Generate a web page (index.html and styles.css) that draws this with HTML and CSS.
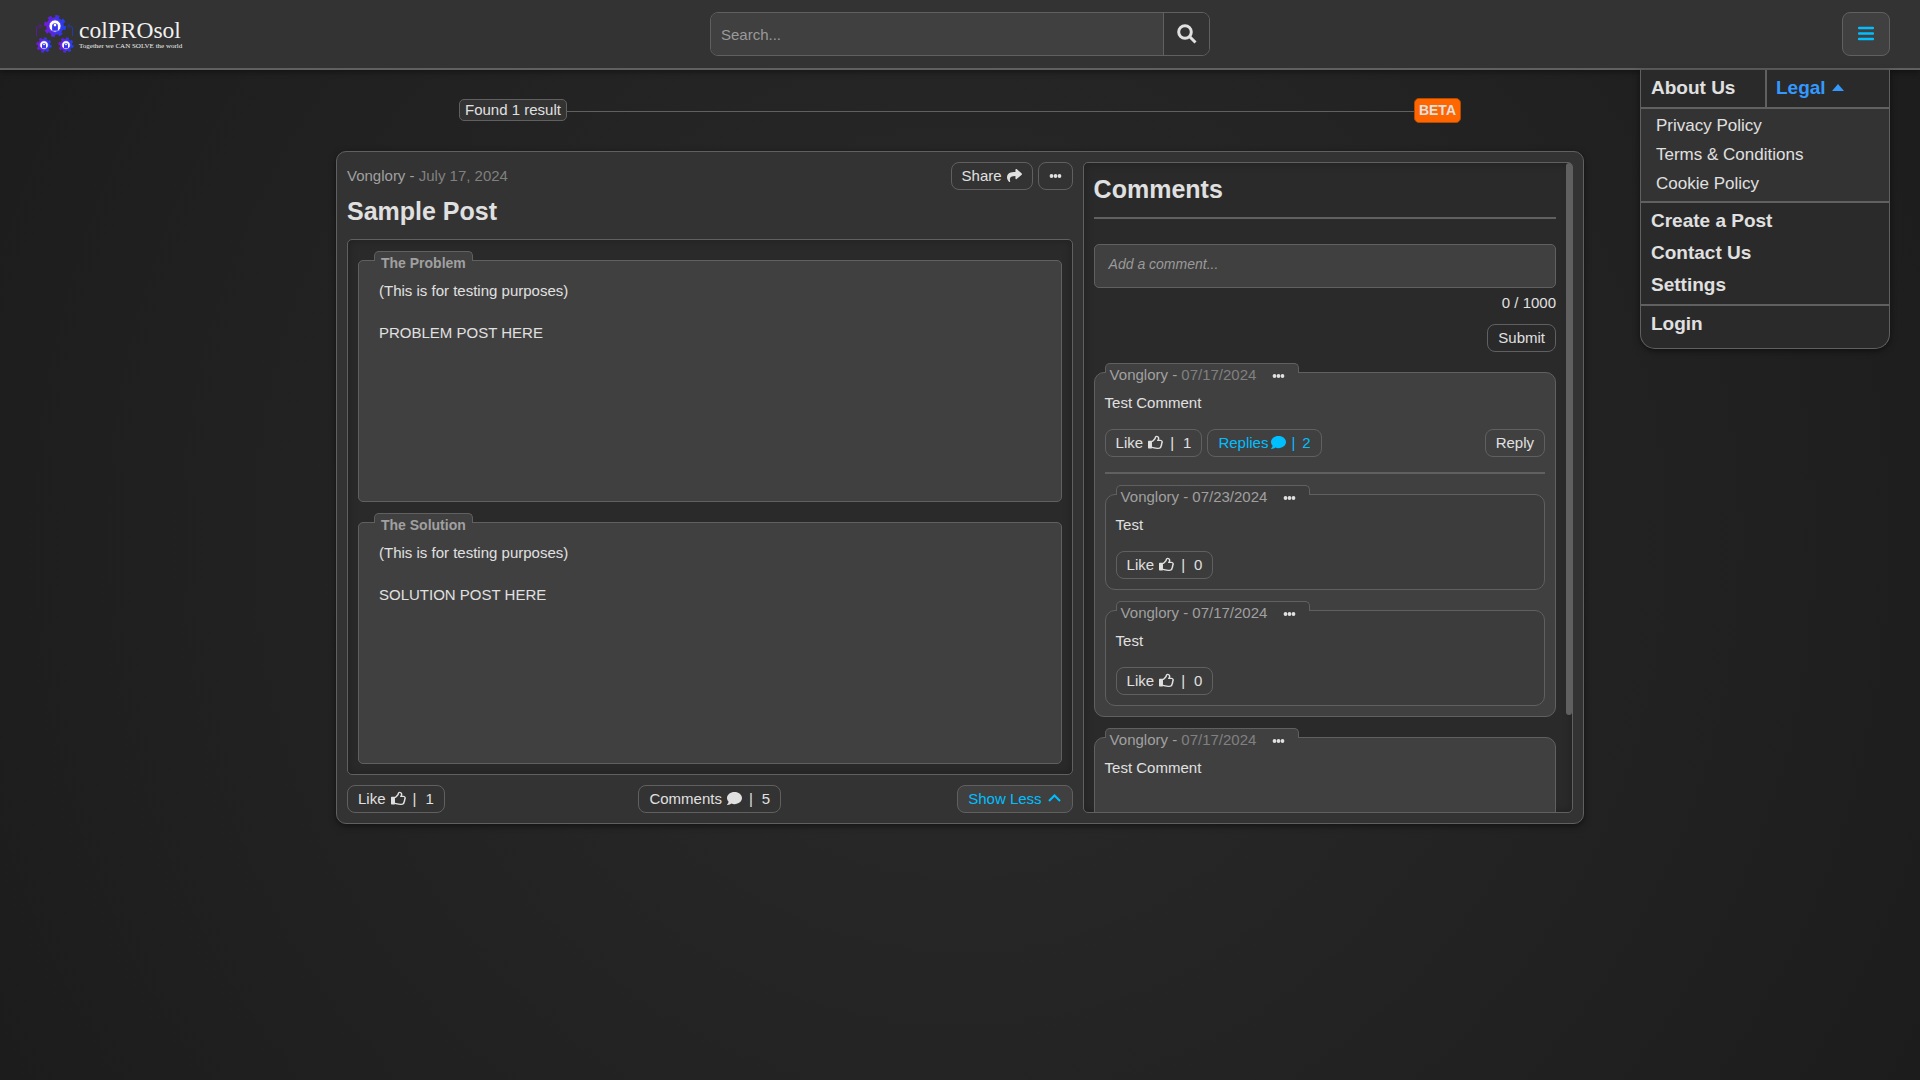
FILE: index.html
```html
<!DOCTYPE html>
<html lang="en">

<head>
  <meta charset="utf-8">
  <meta name="viewport" content="width=device-width, initial-scale=1">
  <title>colPROsol</title>
  <link rel="icon" href="data:,">
  <link rel="stylesheet" href="styles.css">
</head>

<body>
  <!-- shared icons -->
  <svg class="sprite" aria-hidden="true">
    <symbol id="icon-like" viewBox="0 0 512 512">
      <path transform="translate(0 28) scale(1.06 0.88)" d="M466.27 286.69C475.04 271.84 480 256 480 236.85c0-44.015-37.218-85.58-85.82-85.58H357.7c4.92-12.81 8.85-28.13 8.85-46.54C366.55 31.936 328.86 0 271.28 0c-61.607 0-58.093 94.933-71.76 108.6-22.747 22.747-49.615 66.447-68.76 83.4H32c-17.673 0-32 14.327-32 32v240c0 17.673 14.327 32 32 32h64c14.893 0 27.408-10.174 30.978-23.95 44.509 1.001 75.06 39.94 177.802 39.94 7.22 0 15.22.01 22.22.01 77.117 0 111.986-39.423 112.94-95.33 13.319-18.425 20.299-43.122 17.34-66.99 9.854-18.452 13.664-40.343 8.99-62.99zm-61.75 53.83c12.56 21.13 1.26 49.41-13.94 57.57 7.7 48.78-17.608 65.9-53.12 65.9h-37.82c-71.639 0-118.029-37.82-171.64-37.82V240h10.92c28.36 0 67.98-70.89 94.54-97.46 28.36-28.36 18.91-75.63 37.82-94.54 47.27 0 47.27 32.98 47.27 56.73 0 39.17-28.36 56.72-28.36 94.54h103.99c21.11 0 37.73 18.91 37.82 37.82.09 18.9-12.82 37.81-22.27 37.81 13.489 14.555 16.371 45.236-5.21 65.62z"/>
    </symbol>
    <symbol id="icon-comment" viewBox="0 0 512 512">
      <path d="M256 32C114.6 32 0 125.1 0 240c0 49.6 21.4 95 57 130.7C44.5 421.1 2.7 466 2.2 466.5c-2.2 2.3-2.8 5.7-1.5 8.7S4.8 480 8 480c66.3 0 116-31.8 140.6-51.4 32.7 12.3 69 19.4 107.4 19.4 141.4 0 256-93.1 256-208S397.4 32 256 32z"/>
    </symbol>
    <symbol id="icon-share" viewBox="0 0 512 512">
      <path d="M503.691 189.836L327.687 37.851C312.281 24.546 288 35.347 288 56.015v80.053C127.371 137.907 0 170.1 0 322.326c0 61.441 39.581 122.309 83.333 154.132 13.653 9.931 33.111-2.533 28.077-18.631C66.066 312.814 132.917 274.316 288 272.085V360c0 20.7 24.3 31.453 39.687 18.164l176.004-152c11.071-9.562 11.086-26.753 0-36.328z"/>
    </symbol>
    <symbol id="icon-dots" viewBox="0 0 12 4">
      <circle cx="2" cy="2" r="1.9"/><circle cx="6" cy="2" r="1.9"/><circle cx="10" cy="2" r="1.9"/>
    </symbol>
    <symbol id="gear" viewBox="-12 -12 24 24">
      <circle r="7.5" fill="none" stroke-width="3.5"/>
      <circle r="10" fill="none" stroke-width="3" stroke-dasharray="4 3.854"/>
      <circle r="6.4" fill="#fff"/>
      <path d="M-3 5V0a3 3 0 0 1 6 0v5z" fill="#3a35e8" stroke="none"/>
      <circle cy="-1" r="1.4" fill="#fff" stroke="none"/>
    </symbol>
  </svg>

  <header class="navbar">
    <a class="logo" href="#" aria-label="colPROsol home">
      <svg viewBox="0 0 300 80" role="img">
        <defs>
          <linearGradient id="logo-gradient" gradientUnits="userSpaceOnUse" x1="-12" y1="0" x2="12" y2="0">
            <stop offset="0" stop-color="#7a16dc"/>
            <stop offset="1" stop-color="#1c42f5"/>
          </linearGradient>
        </defs>
        <g stroke="url(#logo-gradient)">
          <use href="#gear" x="15" y="1" width="46" height="46"/>
          <use href="#gear" x="0" y="46" width="32" height="32"/>
          <use href="#gear" x="44" y="46" width="32" height="32"/>
        </g>
        <path d="M1 44V28q0-4 5-4h3M6 19l5 5-5 5" fill="none" stroke="#5a1a9c" stroke-width="2"/>
        <path d="M73 44V28q0-4-5-4h-3M68 19l-5 5 5 5" fill="none" stroke="#2438b0" stroke-width="2"/>
        <text class="logo-name" x="86" y="48">colPROsol</text>
        <text class="logo-tagline" x="86" y="67">Together we CAN SOLVE the world</text>
      </svg>
    </a>

    <form class="search">
      <input type="search" placeholder="Search..." aria-label="Search">
      <button type="button" aria-label="Search">
        <svg viewBox="0 0 20 20"><circle cx="8" cy="8" r="6.3"/><path d="M12.5 12.5L18.5 18.5"/></svg>
      </button>
    </form>

    <div class="menu">
      <button class="menu-toggle" type="button" aria-label="Menu" aria-expanded="true">
        <svg viewBox="0 0 16 15"><path d="M1 2h14M1 7.500h14M1 13h14"/></svg>
      </button>
      <nav class="dropdown">
        <div class="dropdown-top">
          <a href="#">About Us</a>
          <button type="button" aria-expanded="true">Legal
            <svg viewBox="0 0 12 7"><path d="M6 0l6 7H0z"/></svg>
          </button>
        </div>
        <div class="dropdown-legal">
          <a href="#">Privacy Policy</a>
          <a href="#">Terms &amp; Conditions</a>
          <a href="#">Cookie Policy</a>
        </div>
        <div class="dropdown-group">
          <a href="#">Create a Post</a>
          <a href="#">Contact Us</a>
          <a href="#">Settings</a>
        </div>
        <div class="dropdown-group">
          <a href="#">Login</a>
        </div>
      </nav>
    </div>
  </header>

  <main>
    <div class="results-bar">
      <span class="results-count">Found 1 result</span>
      <span class="results-line"></span>
      <span class="beta">BETA</span>
    </div>

    <article class="post">
      <div class="post-main">
        <div class="post-header">
          <p class="author">Vonglory - <time>July 17, 2024</time></p>
          <button class="btn" type="button">Share <svg class="icon"><use href="#icon-share"/></svg></button>
          <button class="btn" type="button" aria-label="More"><svg class="dots"><use href="#icon-dots"/></svg></button>
        </div>
        <h1>Sample Post</h1>

        <div class="post-content">
          <section class="post-section">
            <h2>The Problem</h2>
            <p>(This is for testing purposes)<br><br>PROBLEM POST HERE</p>
          </section>
          <section class="post-section">
            <h2>The Solution</h2>
            <p>(This is for testing purposes)<br><br>SOLUTION POST HERE</p>
          </section>
        </div>

        <div class="post-footer">
          <button class="btn" type="button">Like <svg class="icon"><use href="#icon-like"/></svg><span class="bar">|</span>1</button>
          <button class="btn" type="button">Comments <svg class="icon"><use href="#icon-comment"/></svg><span class="bar">|</span>5</button>
          <button class="btn active" type="button">Show Less
            <svg class="icon chevron" viewBox="0 0 15 15"><path d="M2 10l5.500-5.500L13 10"/></svg>
          </button>
        </div>
      </div>

      <aside class="comments">
        <div class="comments-scroll">
          <h2>Comments</h2>
          <form class="comment-form">
            <textarea rows="1" placeholder="Add a comment..." aria-label="Add a comment"></textarea>
            <span>0 / 1000</span>
            <button class="btn" type="button">Submit</button>
          </form>

          <div class="comment">
            <div class="comment-tab">
              <span>Vonglory - <time>07/17/2024</time></span>
              <button type="button" aria-label="More"><svg class="dots"><use href="#icon-dots"/></svg></button>
            </div>
            <p>Test Comment</p>
            <div class="comment-actions">
              <button class="btn" type="button">Like <svg class="icon"><use href="#icon-like"/></svg><span class="bar">|</span>1</button>
              <button class="btn replies-btn" type="button">Replies <svg class="icon"><use href="#icon-comment"/></svg><span class="bar">|</span>2</button>
              <button class="btn reply-btn" type="button">Reply</button>
            </div>
            <div class="replies">
              <div class="comment reply">
                <div class="comment-tab">
                  <span>Vonglory - 07/23/2024</span>
                  <button type="button" aria-label="More"><svg class="dots"><use href="#icon-dots"/></svg></button>
                </div>
                <p>Test</p>
                <div class="comment-actions">
                  <button class="btn" type="button">Like <svg class="icon"><use href="#icon-like"/></svg><span class="bar">|</span>0</button>
                </div>
              </div>
              <div class="comment reply">
                <div class="comment-tab">
                  <span>Vonglory - 07/17/2024</span>
                  <button type="button" aria-label="More"><svg class="dots"><use href="#icon-dots"/></svg></button>
                </div>
                <p>Test</p>
                <div class="comment-actions">
                  <button class="btn" type="button">Like <svg class="icon"><use href="#icon-like"/></svg><span class="bar">|</span>0</button>
                </div>
              </div>
            </div>
          </div>

          <div class="comment">
            <div class="comment-tab">
              <span>Vonglory - <time>07/17/2024</time></span>
              <button type="button" aria-label="More"><svg class="dots"><use href="#icon-dots"/></svg></button>
            </div>
            <p>Test Comment</p>
          </div>
        </div>
        <span class="scroll-thumb"></span>
      </aside>
    </article>
  </main>
</body>

</html>
```
FILE: styles.css
```css
* {
  box-sizing: border-box;
}

body {
  margin: 0;
  min-height: 100vh;
  font-family: "Liberation Sans", Arial, sans-serif;
  font-size: 15px;
  line-height: 21px;
  color: #e0e0e0;
  background: radial-gradient(circle, #2b2b2b, #1c1c1c);
}

h1,
h2,
p {
  margin: 0;
}

a {
  color: inherit;
  text-decoration: none;
}

button,
input,
textarea {
  font: inherit;
  color: inherit;
}

button {
  cursor: pointer;
}

.sprite {
  display: none;
}

/* navbar */
.navbar {
  display: grid;
  grid-template-columns: 1fr minmax(0, 500px) 1fr;
  align-items: center;
  height: 70px;
  padding: 0 30px;
  background: #333;
  border-bottom: 2px solid #606060;
  box-shadow: 0 2px 6px rgba(0, 0, 0, 0.4);
}

.logo {
  padding-left: 6px;
}

.logo svg {
  display: block;
  width: 150px;
  height: 40px;
}

.logo-name,
.logo-tagline {
  font-family: "Liberation Serif", "Times New Roman", serif;
  fill: #f0f0f0;
}

.logo-name {
  font-size: 47px;
}

.logo-tagline {
  font-size: 14px;
}

.search {
  display: flex;
  height: 44px;
  border: 1px solid #606060;
  border-radius: 8px;
  overflow: hidden;
}

.search input {
  flex: 1;
  min-width: 0;
  padding: 0 10px;
  border: none;
  background: #404040;
}

input::placeholder,
textarea::placeholder {
  color: #9a9a9a;
}

.search button {
  width: 46px;
  padding: 0;
  border: none;
  border-left: 1px solid #606060;
  background: #333;
}

.search svg {
  display: block;
  width: 20px;
  height: 20px;
  margin: 0 auto;
  fill: none;
  stroke: #e0e0e0;
  stroke-width: 3;
}

.menu {
  position: relative;
  justify-self: end;
}

.menu-toggle {
  display: flex;
  align-items: center;
  justify-content: center;
  width: 48px;
  height: 44px;
  padding: 0 0 2px;
  border: 1px solid #606060;
  border-radius: 8px;
  background: #404040;
}

.menu-toggle svg {
  width: 16px;
  height: 15px;
  stroke: #00bfff;
  stroke-width: 2.5;
  stroke-linecap: round;
}

.dropdown {
  position: absolute;
  top: 58px;
  right: 0;
  width: 250px;
  padding-bottom: 5px;
  border: 1px solid #606060;
  border-top: none;
  border-radius: 0 0 15px 15px;
  background: #2a2a2a;
  box-shadow: 0 2px 6px rgba(0, 0, 0, 0.5);
  font-size: 19px;
  font-weight: bold;
  line-height: 32px;
}

.dropdown a {
  display: block;
}

.dropdown-top {
  display: grid;
  grid-template-columns: 1fr 1fr;
  line-height: 35px;
}

.dropdown-top a {
  padding: 0 10px 2px;
}

.dropdown-top button {
  display: flex;
  align-items: center;
  gap: 6px;
  padding: 0 9px 2px;
  border: none;
  border-left: 2px solid #606060;
  background: none;
  color: #3399ff;
}

.dropdown-top svg {
  width: 12px;
  height: 7px;
  fill: #3399ff;
}

.dropdown-legal {
  padding: 2px 15px 3px;
  border-top: 2px solid #606060;
  background: #333;
  font-size: 17px;
  font-weight: normal;
  line-height: 29px;
}

.dropdown-group {
  padding: 2px 10px 3px;
  border-top: 2px solid #606060;
}

/* results bar */
.results-bar {
  display: flex;
  align-items: center;
  width: 1002px;
  max-width: 90%;
  height: 26px;
  margin: 28px auto 27px;
}

.results-count {
  margin-bottom: 2px;
  padding: 0 5px;
  border: 1px solid #606060;
  border-radius: 5px;
  background: #333;
  line-height: 20px;
}

.results-line {
  flex: 1;
  height: 1px;
  background: #606060;
}

.beta {
  margin-bottom: 1px;
  padding: 0 4px;
  border: 1px solid #b34a00;
  border-radius: 5px;
  background: #ff6600;
  font-size: 14px;
  font-weight: bold;
  line-height: 23px;
}

/* post */
.post {
  display: grid;
  grid-template-columns: minmax(0, 1fr) 40%;
  gap: 10px;
  width: 65%;
  margin: 0 auto;
  padding: 10px;
  border: 1px solid #606060;
  border-radius: 10px;
  background: #333;
  box-shadow: 0 2px 6px rgba(0, 0, 0, 0.5);
}

.post-header {
  display: flex;
  align-items: center;
  gap: 5px;
}

.author {
  flex: 1;
  padding-bottom: 2px;
  color: #a0a0a0;
}

time {
  color: #808080;
}

.btn {
  display: inline-flex;
  align-items: center;
  gap: 5px;
  height: 28px;
  padding: 0 10px 1px;
  border: 1px solid #606060;
  border-radius: 8px;
  background: none;
}

.btn.active {
  background: #404040;
  color: #00bfff;
}

.icon {
  width: 15px;
  height: 15px;
  fill: currentColor;
}

.chevron {
  fill: none;
  stroke: currentColor;
  stroke-width: 2;
}

.dots {
  width: 13px;
  height: 4px;
  fill: #e0e0e0;
}

.bar {
  padding: 0 4px 0 2px;
}

h1,
.comments h2 {
  font-size: 25px;
  line-height: 30px;
}

h1 {
  margin: 6px 0 13px;
}

.post-content {
  display: flex;
  flex-direction: column;
  gap: 20px;
  padding: 20px 10px 10px;
  border: 1px solid #606060;
  border-radius: 5px;
  background: #2a2a2a;
  box-shadow: inset 0 0 10px rgba(0, 0, 0, 0.25);
}

.post-section {
  min-height: 242px;
  padding: 0 20px 0 15px;
  border: 1px solid #606060;
  border-radius: 5px;
  background: #404040;
}

/* tabs sit over the top border of their box */
.post-section h2,
.comment-tab {
  width: fit-content;
  height: 10px;
  margin-top: -10px;
  padding: 0 6px;
  border: 1px solid #606060;
  border-bottom: none;
  border-radius: 5px 5px 0 0;
  background: #404040;
  line-height: 22px;
}

.post-section h2 {
  font-size: 14px;
  color: #a0a0a0;
}

.post-section p {
  padding: 19px 5px;
}

.post-footer {
  display: grid;
  grid-template-columns: 1fr auto 1fr;
  justify-items: start;
  margin-top: 10px;
}

.post-footer .btn:last-child {
  justify-self: end;
}

/* comments */
.comments {
  position: relative;
  border: 1px solid #606060;
  border-radius: 5px;
  background: #2a2a2a;
  box-shadow: inset 0 0 10px rgba(0, 0, 0, 0.25);
}

.comments-scroll {
  height: 100%;
  max-height: 649px;
  padding: 11px 16px 0 10px;
  overflow: hidden;
}

.comments h2 {
  padding-bottom: 13px;
  border-bottom: 2px solid #606060;
}

.comment-form {
  display: flex;
  flex-direction: column;
  align-items: flex-end;
  margin-top: 25px;
}

.comment-form textarea {
  width: 100%;
  height: 44px;
  padding: 9px 14px;
  border: 1px solid #606060;
  border-radius: 5px;
  background: #404040;
  font-size: 14px;
  font-style: italic;
  resize: none;
}

.comment-form span {
  margin: 4px 0 11px;
}

.comment {
  margin-top: 20px;
  min-height: 96px;
  padding: 0 10px 10px;
  border: 1px solid #606060;
  border-radius: 10px;
  background: #404040;
}

.comment-tab {
  display: flex;
  padding: 0 0 0 4px;
  color: #a0a0a0;
}

.comment-tab button {
  display: flex;
  align-items: center;
  justify-content: center;
  width: 40px;
  height: 24px;
  margin-left: 2px;
  padding: 0;
  border: none;
  background: none;
}

.comment p {
  padding: 19px 0 16px;
}

.comment-actions {
  display: flex;
  gap: 5px;
}

.replies-btn {
  gap: 3px;
  color: #00bfff;
}

.reply-btn {
  margin-left: auto;
}

.replies {
  margin-top: 15px;
  border-top: 2px solid #606060;
}

.reply,
.reply .comment-tab {
  background: #3c3c3c;
}

.scroll-thumb {
  position: absolute;
  top: 0;
  right: 0;
  width: 6px;
  height: 85%;
  border-radius: 3px;
  background: #606060;
}
```
